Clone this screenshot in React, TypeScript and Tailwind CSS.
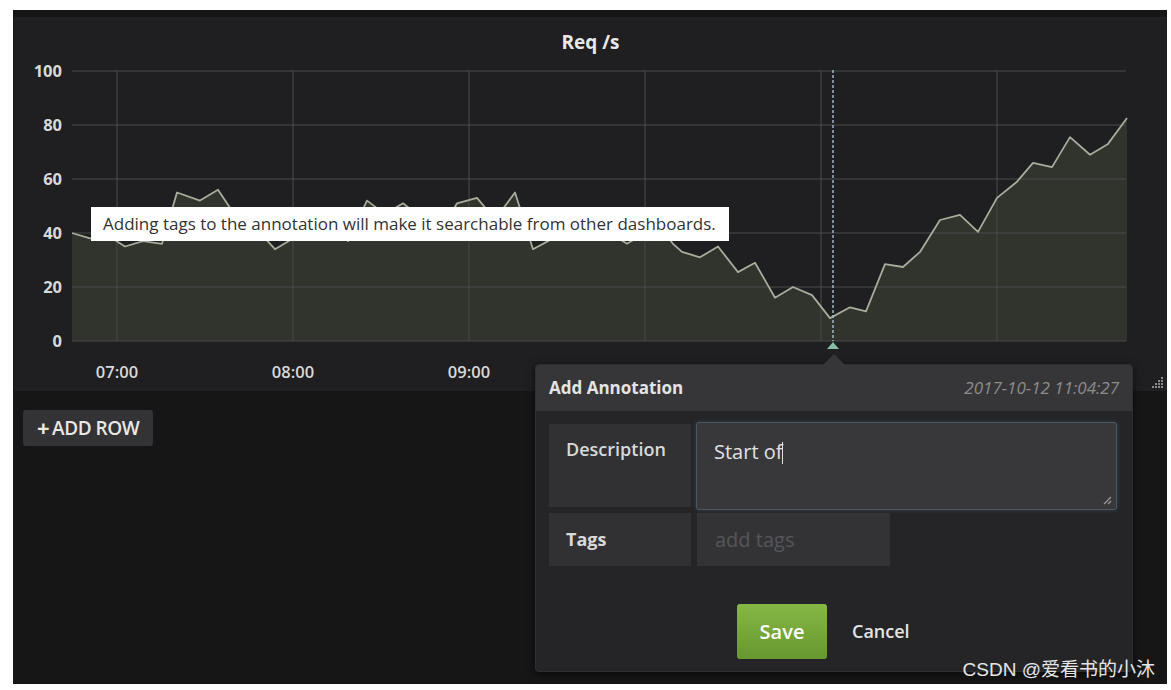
import React from 'react';

// page-x, value pairs read off the graph
const points: [number, number][] = [
  [72, 40], [90, 38], [108, 39], [125, 35], [143, 37], [162, 36], [177, 55], [200, 52],
  [218, 56], [236, 46], [255, 42], [275, 34], [293, 38], [311, 41], [330, 44], [348, 37],
  [367, 52], [385, 47], [403, 51], [420, 46], [440, 40], [457, 51], [477, 53], [495, 45],
  [515, 55], [533, 34], [553, 38], [572, 39], [590, 45], [610, 40], [627, 36], [645, 40],
  [660, 42], [673, 36], [682, 33], [700, 31], [718, 35], [738, 25.5], [755, 29], [775, 16],
  [793, 20], [812, 17], [830, 8.5], [850, 12.5], [866, 11], [885, 28.5], [903, 27.4],
  [920, 33], [940, 44.8], [960, 46.7], [978, 40.4], [997, 53], [1017, 59], [1033, 66],
  [1052, 64.4], [1070, 75.5], [1090, 69], [1108, 73], [1127, 82.6],
];

const sx = (x: number) => x - 14;
const sy = (v: number) => 288 - 2.7 * v;

const yTicks = [0, 20, 40, 60, 80, 100];
// 10:00 onwards sit under the annotation popup
const xTicks = ['07:00', '08:00', '09:00'];

function Chart() {
  const line = points.map(([x, v], i) => `${i ? 'L' : 'M'}${sx(x)},${sy(v).toFixed(1)}`).join(' ');
  const area = `${line} L${sx(1127)},288 L${sx(72)},288 Z`;
  return (
    <svg width={1153} height={338} className="block" style={{ fontFamily: '"Open Sans", sans-serif' }}>
      <path d={area} fill="#31332d" />
      {yTicks.map((v) => (
        <line key={v} x1={58} x2={1112} y1={sy(v)} y2={sy(v)} stroke="#4a4a4a" strokeWidth={1} />
      ))}
      {[0, 1, 2, 3, 4, 5].map((i) => (
        <line key={i} x1={103 + 176 * i} x2={103 + 176 * i} y1={18} y2={288} stroke="#4a4a4a" strokeWidth={1} />
      ))}
      <path d={line} fill="none" stroke="#a6ad9c" strokeWidth={1.8} strokeLinejoin="round" />
      <line x1={819} x2={819} y1={17} y2={288} stroke="#a9bfcf" strokeWidth={1.4} strokeDasharray="3 2" />
      <polygon points="813,296 825,296 819,289" fill="#86bba6" />
      {yTicks.map((v) => (
        <text key={v} x={48} y={sy(v) + 6} textAnchor="end" fill="#d8d9da" fontSize={16.5} fontWeight={700}>
          {v}
        </text>
      ))}
      {xTicks.map((t, i) => (
        <text key={t} x={103 + 176 * i} y={325} textAnchor="middle" fill="#d8d9da" fontSize={16.5} fontWeight={600}>
          {t}
        </text>
      ))}
    </svg>
  );
}

function ResizeGrip() {
  const dots = [[8, 0], [8, 3], [5, 3], [8, 6], [5, 6], [2, 6], [8, 9], [5, 9], [2, 9], [-1, 9]];
  return (
    <svg width={12} height={12} className="absolute right-[4px] bottom-[3px]">
      {dots.map(([x, y], i) => (
        <rect key={i} x={x + 2} y={y + 1} width={2} height={2} fill="#8a8a8a" />
      ))}
    </svg>
  );
}

function AnnotationPopup() {
  return (
    <div className="absolute left-[522px] top-[354px] w-[598px] h-[308px] rounded-[4px] bg-[#252527] border border-[#2f2f31] shadow-[0_2px_8px_rgba(0,0,0,0.6)]">
      <div className="absolute left-[287px] -top-[11px] w-0 h-0 border-l-[11px] border-r-[11px] border-b-[11px] border-l-transparent border-r-transparent border-b-[#363638]" />
      <div className="h-[46px] flex items-center justify-between px-[13px] bg-[#363638] rounded-t-[4px]">
        <span className="text-[17px] font-bold text-[#e4e4e4]">Add Annotation</span>
        <span className="text-[17px] italic text-[#8c8c8c]">2017-10-12 11:04:27</span>
      </div>
      <div className="pl-[13px] pt-[11px]">
        <div className="flex items-start gap-[5px]">
          <div className="mt-[2px] w-[142px] h-[83px] bg-[#313133] pl-[17px] pt-[12px] text-[18px] font-semibold text-[#d8d9da]">
            Description
          </div>
          <div className="relative w-[421px] h-[88px] bg-[#38383a] border border-[#4a5866] rounded-[3px] pl-[17px] pt-[15px] shadow-[0_0_4px_rgba(90,120,150,0.35)]">
            <span className="text-[20px] leading-[28px] text-[#e2e2e2]">Start of</span>
            <span className="inline-block w-[1px] h-[22px] bg-[#e2e2e2] align-middle -mt-[3px]" />
            <svg width={10} height={10} className="absolute right-[4px] bottom-[4px]">
              <line x1={9} y1={2} x2={2} y2={9} stroke="#9a9a9a" strokeWidth={1.2} />
              <line x1={9} y1={6} x2={6} y2={9} stroke="#9a9a9a" strokeWidth={1.2} />
            </svg>
          </div>
        </div>
        <div className="flex gap-[6px] mt-[3px]">
          <div className="w-[142px] h-[53px] bg-[#313133] pl-[17px] flex items-center text-[18px] font-bold text-[#d8d9da]">
            Tags
          </div>
          <div className="w-[193px] h-[53px] bg-[#333335] pl-[18px] flex items-center text-[20px] text-[#55565a]">
            add tags
          </div>
        </div>
        <div className="flex items-center mt-[38px] pl-[188px] gap-[25px]">
          <div className="w-[90px] h-[55px] rounded-[3px] bg-gradient-to-b from-[#86b845] to-[#67972f] flex items-center justify-center text-[20px] font-semibold text-white">
            Save
          </div>
          <span className="text-[18px] font-semibold text-[#e4e4e4]">Cancel</span>
        </div>
      </div>
    </div>
  );
}

export default function App() {
  return (
    <div className="w-[1171px] h-[690px] bg-white pt-[10px] pl-[13px] pr-[4px] pb-[6px]" style={{ fontFamily: '"Open Sans", sans-serif' }}>
      <div className="relative h-full bg-[#161616] flex flex-col overflow-hidden">
        <div className="relative mt-[7px] ml-[1px] h-[374px] bg-[#1f1e20]">
          <div className="pt-[14px] h-[36px] text-center text-[19px] leading-[22px] font-bold text-[#e8e8e8]">Req /s</div>
          <Chart />
          <div className="absolute left-[77px] top-[190px] w-[638px] h-[34px] bg-white pl-[12px] flex items-center text-[17px] text-[#333]">
            Adding tags to the annotation will make it searchable from other dashboards.
          </div>
          <ResizeGrip />
        </div>
        <div className="mt-[19px] ml-[10px] self-start h-[36px] px-[14px] rounded-[3px] bg-[#333335] flex items-center gap-[3px] text-[19px] font-semibold tracking-tight text-[#e8e8e8]">
          <span className="text-[22px] font-bold leading-none -mt-[2px]">+</span>
          <span>ADD ROW</span>
        </div>
        <AnnotationPopup />
        <div
          className="absolute right-[12px] top-[649px] text-[19px] leading-[22px] text-[#e6e6e6]"
          style={{ fontFamily: '"Liberation Sans", "Noto Sans CJK SC", sans-serif' }}
        >
          CSDN @爱看书的小沐
        </div>
      </div>
    </div>
  );
}
